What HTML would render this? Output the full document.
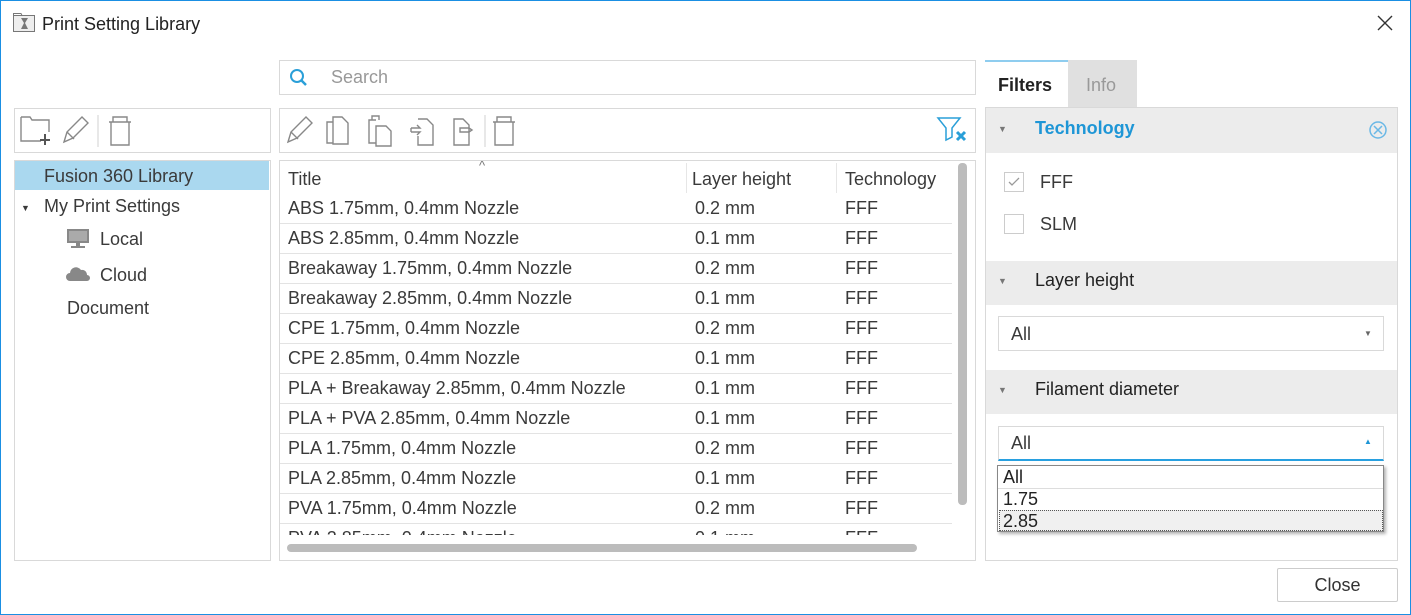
<!DOCTYPE html>
<html><head><meta charset="utf-8"><style>
*{box-sizing:border-box;margin:0;padding:0}
body{width:1411px;height:615px;background:#fff;font-family:"Liberation Sans",sans-serif;color:#3a3a3a;position:relative;overflow:hidden;font-size:18px}
.win{position:absolute;left:0;top:0;width:1411px;height:615px;border:1px solid #1a8fe3}
.a{position:absolute}
.box{position:absolute;border:1px solid #d9d9d9;background:#fff}
.row{position:absolute;left:0;height:30px;line-height:29px;width:672px;border-bottom:1px solid #e3e3e3;white-space:nowrap}
.row span{position:absolute}
</style></head><body><div class="win"></div>
<svg class="a" style="left:13px;top:13px" width="22" height="20" viewBox="0 0 22 20"><rect x="0.5" y="2.5" width="21" height="16" fill="#eee" stroke="#777"/><path d="M0.5 2.5V0.5H8L9 2.5" fill="none" stroke="#777"/><path d="M8 5h7l-3 5 3 6H8l3-6z" fill="#777"/></svg>
<div class="a" style="left:42px;top:14px;font-size:18px;color:#222">Print Setting Library</div>
<svg class="a" style="left:1377px;top:15px" width="16" height="16"><path d="M1 1L15 15M15 1L1 15" stroke="#333" stroke-width="1.4"/></svg>

<div class="box" style="left:279px;top:60px;width:697px;height:35px"></div>
<svg class="a" style="left:289px;top:68px" width="20" height="20"><circle cx="8" cy="8" r="6" fill="none" stroke="#2a9fd8" stroke-width="2"/><path d="M12.5 12.5L17 17" stroke="#2a9fd8" stroke-width="2.5"/></svg>
<div class="a" style="left:331px;top:67px;color:#999">Search</div>

<div class="box" style="left:14px;top:108px;width:257px;height:45px"></div>
<svg class="a" style="left:20px;top:113px" width="120" height="34" fill="none" stroke="#888" stroke-width="1.4">
<path d="M1 4h9l2 3h17v12M1 4v24h20"/><path d="M25 21v11M20 27h10" stroke="#555" stroke-width="2"/>
<path d="M44 29l3-10 15-15 6 6-15 15z M47 19l7 7"/>
<line x1="78" y1="2" x2="78" y2="34" stroke="#ddd"/>
<path d="M89 9h22M93 9V4h14v5M91 9v23h18V9"/></svg>
<div class="box" style="left:279px;top:108px;width:697px;height:45px"></div>
<svg class="a" style="left:285px;top:113px" width="240" height="34" fill="none" stroke="#888" stroke-width="1.4">
<path d="M3 29l3-10 15-15 6 6-15 15z M6 19l7 7"/>
<path d="M48 9h-6v21h6M48 4h9l6 6v21H48z"/>
<path d="M91 7h-7v23h7M87 7V3h7v4M91 13h10l5 5v15H91z"/>
<path d="M133 6h9l6 6v20h-15v-9M126 15h9l-3-3M126 19h9l-3 3M126 15v4"/>
<path d="M169 6h9l6 6v20h-15zM175 15h9l3 2-3 2h-9z"/>
<line x1="200" y1="2" x2="200" y2="34" stroke="#ddd"/>
<path d="M208 9h22M212 9V4h14v5M210 9v23h18V9"/></svg>
<svg class="a" style="left:936px;top:115px" width="34" height="28"><path d="M2 3h22l-8 10v9l-6 3V13z" fill="none" stroke="#2a9fd8" stroke-width="1.5"/><path d="M21 17l8 8M29 17l-8 8" stroke="#2a9fd8" stroke-width="3"/></svg>

<div class="box" style="left:14px;top:160px;width:257px;height:401px"></div>
<div class="a" style="left:15px;top:161px;width:254px;height:29px;background:#aad8ef"></div>
<div class="a" style="left:44px;top:166px">Fusion 360 Library</div>
<div class="a" style="left:21px;top:203px;font-size:9px">▼</div>
<div class="a" style="left:44px;top:196px">My Print Settings</div>
<svg class="a" style="left:66px;top:228px" width="26" height="22"><rect x="1" y="1" width="22" height="14" fill="#888"/><rect x="3" y="3" width="18" height="10" fill="#aaa"/><rect x="10" y="15" width="4" height="3" fill="#888"/><rect x="5" y="18" width="14" height="2" fill="#888"/></svg>
<div class="a" style="left:100px;top:229px">Local</div>
<svg class="a" style="left:66px;top:265px" width="26" height="18"><path d="M4 16a4 4 0 0 1 0-8a6 6 0 0 1 11-3a5 5 0 0 1 6 5a3 3 0 0 1 0 6z" fill="#888"/></svg>
<div class="a" style="left:100px;top:265px">Cloud</div>
<div class="a" style="left:67px;top:298px">Document</div>

<div class="box" style="left:279px;top:160px;width:697px;height:401px;overflow:hidden">
<div class="a" style="left:199px;top:-3px;font-size:13px;color:#777">^</div>
<div class="a" style="left:406px;top:2px;width:1px;height:30px;background:#e6e6e6"></div>
<div class="a" style="left:556px;top:2px;width:1px;height:30px;background:#e6e6e6"></div>
<div class="a" style="left:8px;top:8px">Title</div>
<div class="a" style="left:412px;top:8px">Layer height</div>
<div class="a" style="left:565px;top:8px">Technology</div>
<div class="a" style="left:0;top:33px;width:680px;height:341px;overflow:hidden">
<div class="row" style="top:0"><span style="left:8px">ABS 1.75mm, 0.4mm Nozzle</span><span style="left:415px">0.2 mm</span><span style="left:565px">FFF</span></div>
<div class="row" style="top:30px"><span style="left:8px">ABS 2.85mm, 0.4mm Nozzle</span><span style="left:415px">0.1 mm</span><span style="left:565px">FFF</span></div>
<div class="row" style="top:60px"><span style="left:8px">Breakaway 1.75mm, 0.4mm Nozzle</span><span style="left:415px">0.2 mm</span><span style="left:565px">FFF</span></div>
<div class="row" style="top:90px"><span style="left:8px">Breakaway 2.85mm, 0.4mm Nozzle</span><span style="left:415px">0.1 mm</span><span style="left:565px">FFF</span></div>
<div class="row" style="top:120px"><span style="left:8px">CPE 1.75mm, 0.4mm Nozzle</span><span style="left:415px">0.2 mm</span><span style="left:565px">FFF</span></div>
<div class="row" style="top:150px"><span style="left:8px">CPE 2.85mm, 0.4mm Nozzle</span><span style="left:415px">0.1 mm</span><span style="left:565px">FFF</span></div>
<div class="row" style="top:180px"><span style="left:8px">PLA + Breakaway 2.85mm, 0.4mm Nozzle</span><span style="left:415px">0.1 mm</span><span style="left:565px">FFF</span></div>
<div class="row" style="top:210px"><span style="left:8px">PLA + PVA 2.85mm, 0.4mm Nozzle</span><span style="left:415px">0.1 mm</span><span style="left:565px">FFF</span></div>
<div class="row" style="top:240px"><span style="left:8px">PLA 1.75mm, 0.4mm Nozzle</span><span style="left:415px">0.2 mm</span><span style="left:565px">FFF</span></div>
<div class="row" style="top:270px"><span style="left:8px">PLA 2.85mm, 0.4mm Nozzle</span><span style="left:415px">0.1 mm</span><span style="left:565px">FFF</span></div>
<div class="row" style="top:300px"><span style="left:8px">PVA 1.75mm, 0.4mm Nozzle</span><span style="left:415px">0.2 mm</span><span style="left:565px">FFF</span></div>
<div class="row" style="top:330px"><span style="left:8px">PVA 2.85mm, 0.4mm Nozzle</span><span style="left:415px">0.1 mm</span><span style="left:565px">FFF</span></div>
</div>
<div class="a" style="left:678px;top:2px;width:9px;height:342px;background:#bcbcbc;border-radius:4px"></div>
<div class="a" style="left:7px;top:383px;width:630px;height:8px;background:#bcbcbc;border-radius:4px"></div>
</div>

<div class="a" style="left:985px;top:60px;width:83px;height:48px;background:#fff;border-top:2px solid #8fcdef"></div>
<div class="a" style="left:998px;top:75px;font-weight:bold;color:#222">Filters</div>
<div class="a" style="left:1068px;top:60px;width:69px;height:48px;background:#e0e0e0"></div>
<div class="a" style="left:1086px;top:75px;color:#999">Info</div>
<div class="box" style="left:985px;top:107px;width:413px;height:454px"></div>
<div class="a" style="left:986px;top:108px;width:411px;height:45px;background:#ececec"></div>
<div class="a" style="left:998px;top:124px;font-size:9px;color:#777">▼</div>
<div class="a" style="left:1035px;top:118px;font-weight:bold;color:#1e96d6;font-size:18px">Technology</div>
<svg class="a" style="left:1368px;top:120px" width="20" height="20"><circle cx="10" cy="10" r="8" fill="none" stroke="#6ab8e6" stroke-width="1.5"/><path d="M6 6l8 8M14 6l-8 8" stroke="#6ab8e6" stroke-width="1.5"/></svg>
<div class="a" style="left:1004px;top:172px;width:20px;height:20px;border:1px solid #ccc"></div>
<svg class="a" style="left:1007px;top:176px" width="14" height="12"><path d="M2 6l3 3 7-7" fill="none" stroke="#999" stroke-width="1.3"/></svg>
<div class="a" style="left:1040px;top:172px">FFF</div>
<div class="a" style="left:1004px;top:214px;width:20px;height:20px;border:1px solid #ccc"></div>
<div class="a" style="left:1040px;top:214px">SLM</div>
<div class="a" style="left:986px;top:261px;width:411px;height:44px;background:#ececec"></div>
<div class="a" style="left:998px;top:276px;font-size:9px;color:#777">▼</div>
<div class="a" style="left:1035px;top:270px;color:#222">Layer height</div>
<div class="box" style="left:998px;top:316px;width:386px;height:35px"></div>
<div class="a" style="left:1011px;top:324px">All</div>
<div class="a" style="left:1364px;top:329px;font-size:8px;color:#666">▼</div>
<div class="a" style="left:986px;top:370px;width:411px;height:44px;background:#ececec"></div>
<div class="a" style="left:998px;top:385px;font-size:9px;color:#777">▼</div>
<div class="a" style="left:1035px;top:379px;color:#222">Filament diameter</div>
<div class="box" style="left:998px;top:426px;width:386px;height:35px;border-bottom:2px solid #28a0e0"></div>
<div class="a" style="left:1011px;top:433px">All</div>
<div class="a" style="left:1364px;top:437px;font-size:8px;color:#1e96d6">▲</div>
<div class="a" style="left:997px;top:465px;width:387px;height:67px;border:1px solid #888;background:#fff;box-shadow:2px 2px 3px rgba(0,0,0,.3)"></div>
<div class="a" style="left:998px;top:488px;width:385px;height:1px;background:#ddd"></div>
<div class="a" style="left:999px;top:510px;width:384px;height:21px;background:#f0f0f0;border:1px dotted #555"></div>
<div class="a" style="left:1003px;top:467px;color:#222">All</div>
<div class="a" style="left:1003px;top:489px;color:#222">1.75</div>
<div class="a" style="left:1003px;top:511px;color:#222">2.85</div>

<div class="a" style="left:1277px;top:568px;width:121px;height:34px;border:1px solid #ccc;border-radius:2px;text-align:center;line-height:32px;color:#333">Close</div>
</body></html>
